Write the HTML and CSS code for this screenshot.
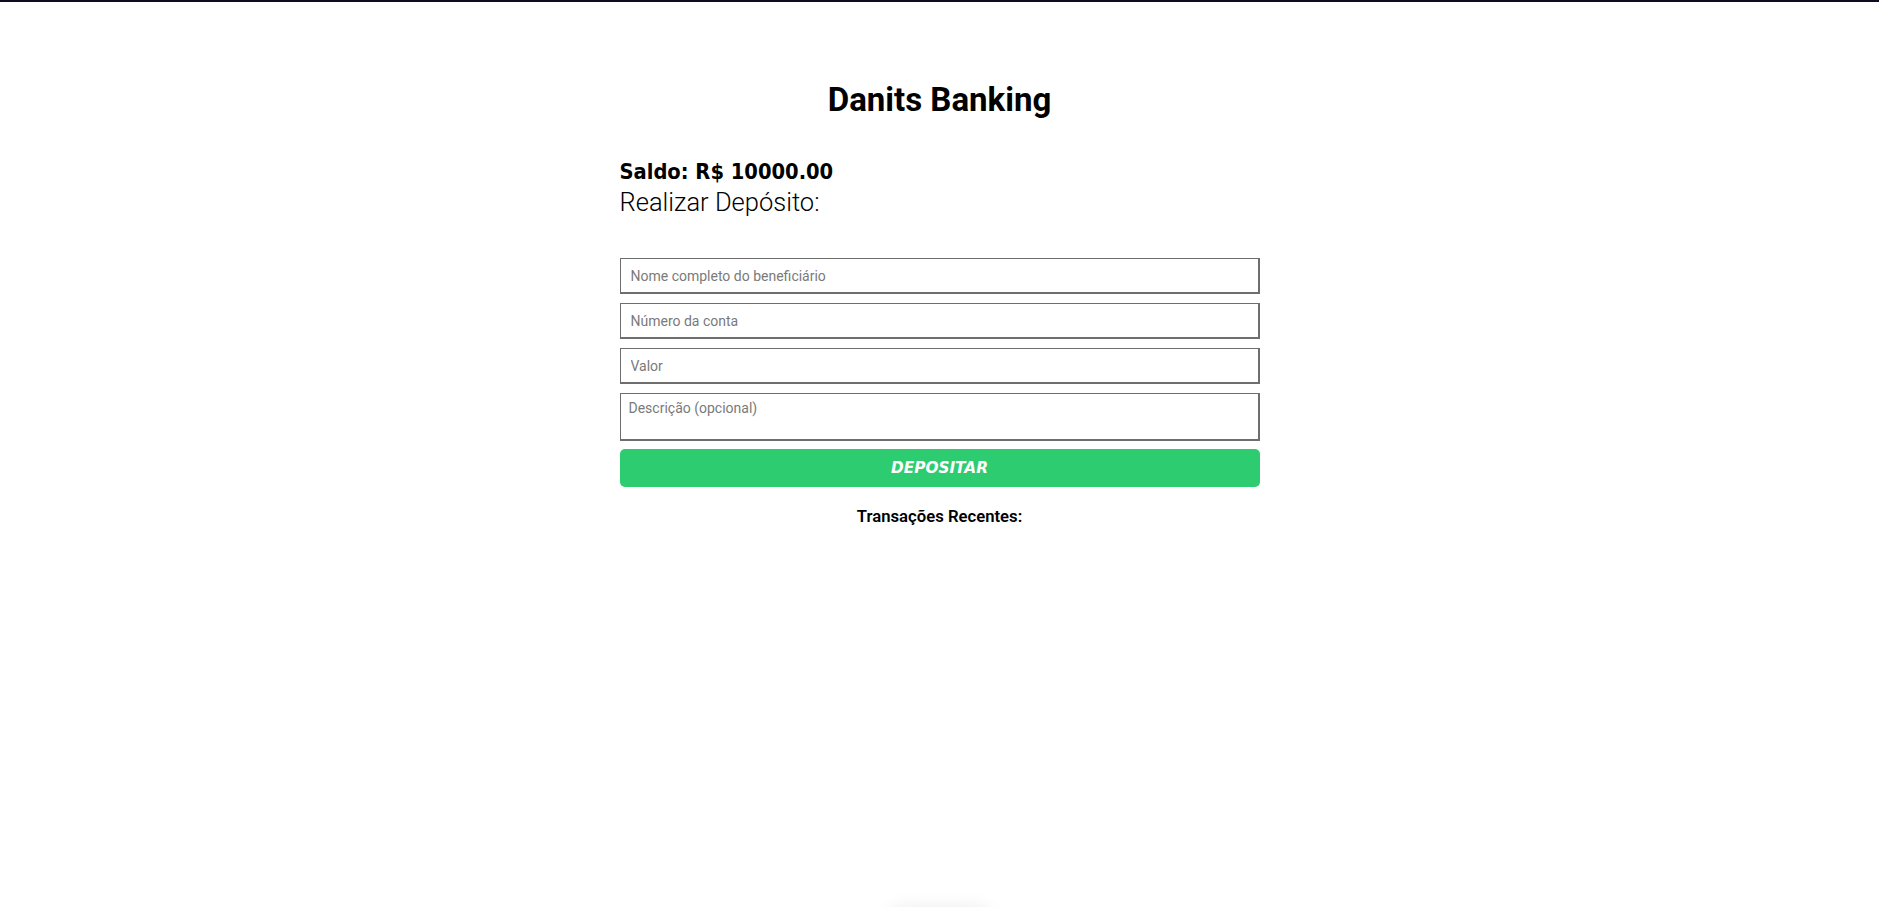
FILE: index.html
```html
<!DOCTYPE html>
<html lang="pt-BR">
<head>
<meta charset="utf-8">
<title>Danits Banking</title>
<link rel="stylesheet" href="styles.css">
</head>
<body>
<div class="topbar"></div>
<main class="app">
  <h1 class="title">Danits Banking</h1>
  <section class="account">
    <p class="balance">Saldo: R$ 10000.00</p>
    <p class="subtitle">Realizar Depósito:</p>
  </section>
  <form class="form">
    <input class="field" type="text" placeholder="Nome completo do beneficiário">
    <input class="field" type="text" placeholder="Número da conta">
    <input class="field" type="text" placeholder="Valor">
    <textarea class="field area" placeholder="Descrição (opcional)"></textarea>
    <button class="btn" type="button">DEPOSITAR</button>
  </form>
  <h2 class="recent">Transações Recentes:</h2>
</main>
<div class="toast"></div>
</body>
</html>
```
FILE: styles.css
```css
* { box-sizing: border-box; }
html, body { margin: 0; padding: 0; background: #fff; }
body { font-family: Roboto, "Noto Sans", sans-serif; color: #000; }
.topbar { height: 2px; background: #100b22; }
.app { width: 640px; margin: 0 auto; display: flex; flex-direction: column; }
.title { margin: 78px 0 0; font-size: 33px; line-height: 40px; font-weight: 700; text-align: center; }
.account { margin-top: 38px; }
.balance { margin: 0; font-family: "DejaVu Sans Condensed", "DejaVu Sans", sans-serif; font-stretch: condensed; font-size: 21.7px; line-height: 27px; font-weight: 700; }
.subtitle { margin: 2px 0 0; font-size: 25.5px; line-height: 30px; font-weight: 300; }
.form { margin-top: 41px; display: flex; flex-direction: column; gap: 9px; }
.field { display: block; width: 100%; height: 36px; padding: 0 10px; border: solid #6e6e6e; border-width: 1px 2px 2px 1px; font-family: Roboto, sans-serif; font-size: 14px; color: #333; background: #fff; outline: none; }
.field::placeholder { color: #7a7a7a; }
.area { height: 48px; padding: 6px 8px; resize: none; }
.btn { height: 38px; margin-top: -1px; border: none; border-radius: 5px; background: #2ecc71; color: #fff; font-family: "DejaVu Sans", sans-serif; font-size: 15.3px; font-weight: 700; font-style: italic; }
.recent { margin: 20px 0 0; font-size: 16.7px; line-height: 20px; font-weight: 600; text-align: center; }
.toast { position: fixed; left: 50%; bottom: -40px; width: 110px; height: 40px; margin-left: -55px; border-radius: 20px; box-shadow: 0 0 18px rgba(0,0,0,0.08); background: #fff; }
```
